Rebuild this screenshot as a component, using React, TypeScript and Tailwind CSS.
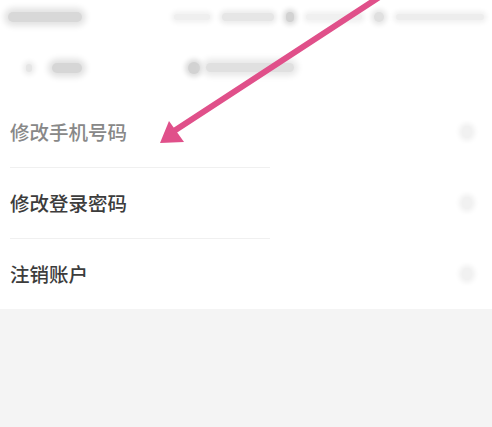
const rows = [
  { label: "修改手机号码", tone: "text-[#888888]" },
  { label: "修改登录密码", tone: "text-[#3c3c3c]" },
  { label: "注销账户", tone: "text-[#3c3c3c]" },
];

function Chevron() {
  return (
    <span className="block h-[12px] w-[10px] rounded-full bg-[#f1f1f1] shadow-[0_0_5px_3px_#f1f1f1]" />
  );
}

function Smudge({ className }: { className: string }) {
  return <span className={`block rounded-full ${className}`} />;
}

function PinkArrow() {
  return (
    <svg
      className="pointer-events-none absolute left-0 top-0"
      width="492"
      height="427"
      viewBox="0 0 492 427"
    >
      <line
        x1="381"
        y1="-4"
        x2="174"
        y2="131"
        stroke="#e0508a"
        strokeWidth="6"
        strokeLinecap="round"
      />
      <polygon points="160,143 169,121 184,142" fill="#e0508a" />
    </svg>
  );
}

export default function App() {
  return (
    <div
      className="relative h-[427px] w-[492px] overflow-hidden bg-[#f4f4f4]"
      style={{ fontFamily: '"Noto Sans CJK SC", "Noto Sans", sans-serif' }}
    >
      <div className="bg-white">
        <div className="flex h-[34px] items-center justify-between pl-[8px] pr-[8px]">
          <Smudge className="h-[10px] w-[74px] bg-[#d8d8d8] shadow-[0_0_6px_4px_#e2e2e2]" />
          <div className="flex items-center gap-[12px]">
            <Smudge className="h-[6px] w-[36px] bg-[#efefef] shadow-[0_0_5px_3px_#f2f2f2]" />
            <Smudge className="h-[8px] w-[52px] bg-[#e6e6e6] shadow-[0_0_5px_3px_#ececec]" />
            <Smudge className="h-[10px] w-[8px] bg-[#d2d2d2] shadow-[0_0_5px_3px_#dddddd]" />
            <Smudge className="h-[6px] w-[56px] bg-[#f0f0f0] shadow-[0_0_5px_3px_#f2f2f2]" />
            <Smudge className="h-[10px] w-[10px] bg-[#e0e0e0] shadow-[0_0_5px_3px_#e8e8e8]" />
            <Smudge className="h-[6px] w-[88px] bg-[#ededed] shadow-[0_0_5px_3px_#f1f1f1]" />
          </div>
        </div>
        <div className="flex h-[63px] items-center pl-[26px] pt-[4px]">
          <div className="flex items-center gap-[20px]">
            <Smudge className="h-[8px] w-[6px] bg-[#e6e6e6] shadow-[0_0_5px_3px_#ededed]" />
            <Smudge className="h-[10px] w-[30px] bg-[#d6d6d6] shadow-[0_0_6px_4px_#e0e0e0]" />
          </div>
          <div className="ml-[106px] flex items-center gap-[6px]">
            <Smudge className="h-[12px] w-[12px] bg-[#d2d2d2] shadow-[0_0_5px_3px_#dcdcdc]" />
            <Smudge className="h-[9px] w-[88px] bg-[#e0e0e0] shadow-[0_0_6px_4px_#e8e8e8]" />
          </div>
        </div>
        <ul>
          {rows.map((row, i) => (
            <li key={row.label} className="flex flex-col">
              <div className="flex h-[70px] items-center justify-between pl-[10px] pr-[20px]">
                <span className={`text-[19.5px] font-medium leading-none ${row.tone}`}>
                  {row.label}
                </span>
                <Chevron />
              </div>
              {i < rows.length - 1 ? (
                <div className="ml-[10px] h-px w-[260px] bg-[#f0f0f0]" />
              ) : null}
            </li>
          ))}
        </ul>
      </div>
      <PinkArrow />
    </div>
  );
}
